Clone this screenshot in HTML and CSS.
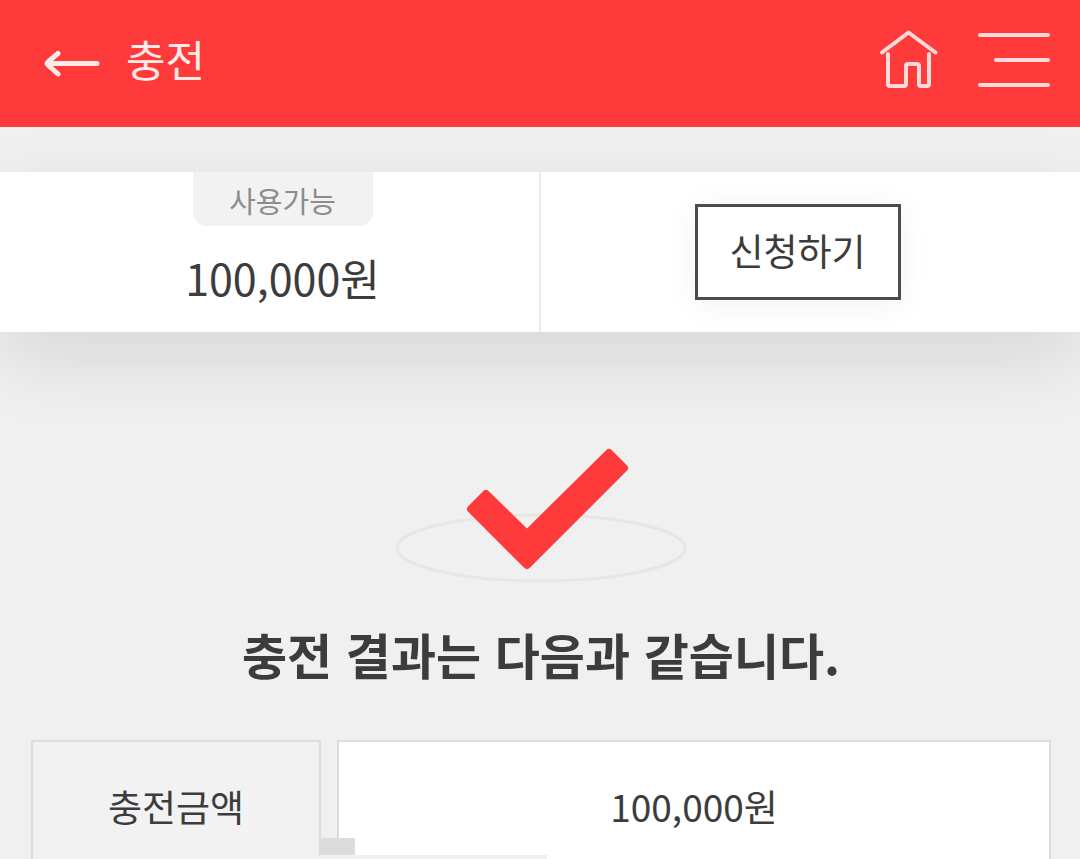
FILE: index.html
```
<!DOCTYPE html>
<html lang="ko">
<head>
    <meta charset="UTF-8">
    <meta name="viewport" content="width=device-width, initial-scale=1.0">
    <title>충전</title>
    <link rel="stylesheet" href="styles.css">
</head>
<body>
    <header class="header">
        <a href="#" class="back" aria-label="뒤로">
            <svg width="56" height="28" viewBox="0 0 56 28">
                <path d="M53 13.500H3M14 3.500L5 11Q2 13.500 5 16L14 24" />
            </svg>
        </a>
        <h1 class="title">충전</h1>
        <a href="#" class="home" aria-label="홈">
            <svg width="60" height="60" viewBox="0 0 60 60">
                <path d="M2 22.500L28.500 2.500L55.500 22.500M8 24V54Q8 56 10 56H24Q26 56 26 54V36Q26 34 28 34H37Q39 34 39 36V54Q39 56 41 56H47Q49 56 49 54V24" />
            </svg>
        </a>
        <button type="button" class="menu" aria-label="메뉴">
            <svg width="72" height="56" viewBox="0 0 72 56">
                <path d="M2 3h68M18 28h52M2 53h68" />
            </svg>
        </button>
    </header>

    <section class="balance">
        <div class="balance-col">
            <span class="badge">사용가능</span>
            <p class="amount">100,000원</p>
        </div>
        <div class="balance-col apply">
            <button type="button" class="apply-btn">신청하기</button>
        </div>
    </section>

    <main class="result">
        <svg class="check" width="292" height="136" viewBox="0 0 292 136">
            <ellipse cx="146" cy="100" rx="144" ry="33" />
            <path d="M76 61L91 46L132 86L214 5L229 20L132 117Z" />
        </svg>
        <h2 class="message">충전 결과는 다음과 같습니다.</h2>
        <dl class="detail">
            <dt>충전금액</dt>
            <dd>100,000원</dd>
        </dl>
    </main>
</body>
</html>
```

FILE: styles.css
```
:root {
    --primary-color: #ff3a3a;
    --background-color: #f0f0f0;
    --text-color: #3c3c3c;
    --line-color: #dcdcdc;
}

* {
    box-sizing: border-box;
}

body {
    font-family: 'Noto Sans CJK KR', sans-serif;
    background-color: var(--background-color);
    color: var(--text-color);
    margin: 0;
    min-height: 100vh;
    display: flex;
    flex-direction: column;
}

h1, h2, p, dl, dd {
    margin: 0;
}

svg {
    display: block;
}

button {
    font-family: inherit;
    color: inherit;
    cursor: pointer;
}

/* header, kept above the shadow of the balance bar */
.header {
    position: relative;
    z-index: 1;
    display: flex;
    align-items: center;
    height: 127px;
    padding: 0 30px 8px 44px;
    background-color: var(--primary-color);
    color: #ffeaea;
}

.header path {
    fill: none;
    stroke: #ffdada;
    stroke-width: 4;
    stroke-linecap: round;
    stroke-linejoin: round;
}

.header .back path {
    stroke: #ffeaea;
    stroke-width: 5;
}

.back {
    padding-top: 8px;
}

.title {
    flex: 1;
    margin-left: 26px;
    padding-bottom: 4px;
    font-size: 43px;
    line-height: 60px;
    font-weight: 400;
}

.menu {
    margin-left: 38px;
    padding: 0;
    border: none;
    background: none;
}

/* balance */
.balance {
    display: flex;
    height: 160px;
    margin-top: 45px;
    padding: 0 26px;
    background-color: #fff;
    box-shadow: 0 26px 80px rgba(0, 0, 0, 0.11);
}

.balance-col {
    flex: 1;
    display: flex;
    flex-direction: column;
    align-items: center;
}

.badge {
    width: 180px;
    height: 54px;
    border-radius: 0 0 14px 14px;
    background-color: #f2f2f2;
    color: #8c8c8c;
    font-size: 29px;
    line-height: 56px;
    text-align: center;
}

.amount {
    margin-top: 21px;
    font-size: 43px;
    line-height: 60px;
}

.apply {
    justify-content: center;
    border-left: 2px solid #ebebeb;
}

.apply-btn {
    width: 206px;
    height: 96px;
    padding: 0 0 4px;
    border: 3px solid #4c4c4c;
    background-color: #fff;
    box-shadow: 0 4px 30px rgba(0, 0, 0, 0.06);
    font-size: 37px;
}

/* result */
.result {
    flex: 1;
    display: flex;
    flex-direction: column;
    padding: 116px 29px 0 31px;
}

.check {
    align-self: center;
}

.check ellipse {
    fill: none;
    stroke: #e6e6e6;
    stroke-width: 3;
}

.check path {
    fill: var(--primary-color);
    stroke: var(--primary-color);
    stroke-width: 8;
    stroke-linejoin: round;
}

.message {
    margin-top: 34px;
    font-size: 49px;
    line-height: 72px;
    font-weight: 700;
    text-align: center;
}

.detail {
    flex: 1;
    display: flex;
    gap: 16px;
    margin-top: 50px;
    font-size: 37px;
    line-height: 60px;
    text-align: center;
}

.detail dt,
.detail dd {
    padding-top: 34px;
    border: 2px solid var(--line-color);
    border-bottom: none;
}

.detail dt {
    position: relative;
    width: 290px;
    background-color: #f2f2f2;
}

/* tab joining the label to its value */
.detail dt::after {
    content: '';
    position: absolute;
    left: 100%;
    bottom: 4px;
    width: 36px;
    height: 17px;
    background-color: var(--line-color);
}

.detail dt::before {
    content: '';
    position: absolute;
    left: 100%;
    bottom: 0;
    width: 228px;
    height: 4px;
    background-color: #f0f0f0;
}

.detail dd {
    flex: 1;
    background-color: #fff;
}
```
